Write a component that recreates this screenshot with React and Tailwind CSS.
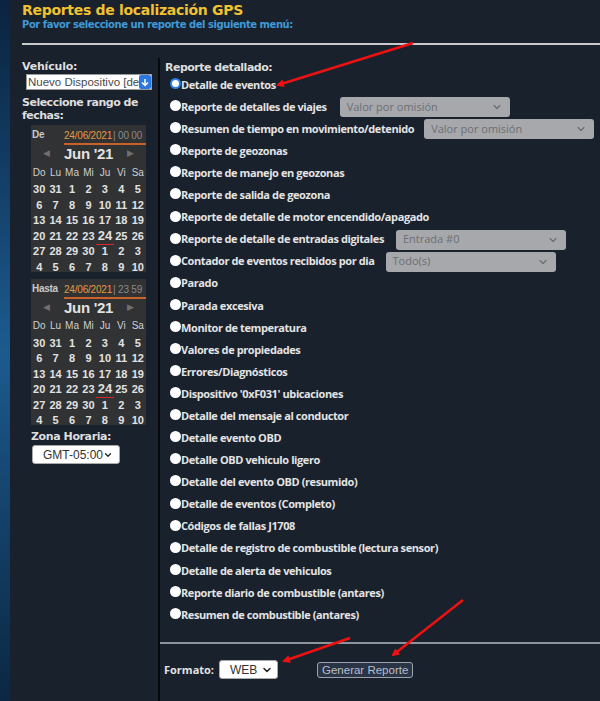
import { ChevronDown } from "lucide-react";

const reportes = [
  "Detalle de eventos",
  "Reporte de detalles de viajes",
  "Resumen de tiempo en movimiento/detenido",
  "Reporte de geozonas",
  "Reporte de manejo en geozonas",
  "Reporte de salida de geozona",
  "Reporte de detalle de motor encendido/apagado",
  "Reporte de detalle de entradas digitales",
  "Contador de eventos recibidos por dia",
  "Parado",
  "Parada excesiva",
  "Monitor de temperatura",
  "Valores de propiedades",
  "Errores/Diagnósticos",
  "Dispositivo '0xF031' ubicaciones",
  "Detalle del mensaje al conductor",
  "Detalle evento OBD",
  "Detalle OBD vehiculo ligero",
  "Detalle del evento OBD (resumido)",
  "Detalle de eventos (Completo)",
  "Códigos de fallas J1708",
  "Detalle de registro de combustible (lectura sensor)",
  "Detalle de alerta de vehiculos",
  "Reporte diario de combustible (antares)",
  "Resumen de combustible (antares)",
];

// selects grises al lado de algunos reportes
const extras = {
  1: { texto: "Valor por omisión", ml: "ml-[13px]" },
  2: { texto: "Valor por omisión", ml: "ml-[10px]" },
  7: { texto: "Entrada #0", ml: "ml-[12px]" },
  8: { texto: "Todo(s)", ml: "ml-[11px]" },
};

const semanas = [
  [30, 31, 1, 2, 3, 4, 5],
  [6, 7, 8, 9, 10, 11, 12],
  [13, 14, 15, 16, 17, 18, 19],
  [20, 21, 22, 23, 24, 25, 26],
  [27, 28, 29, 30, 1, 2, 3],
  [4, 5, 6, 7, 8, 9, 10],
];

const dias = ["Do", "Lu", "Ma", "Mi", "Ju", "Vi", "Sa"];

function Calendario({ etiqueta, hora }) {
  return (
    <div className="w-[115px] bg-[#313233] font-['Liberation_Sans',sans-serif] text-[#e2e2e2] pb-[1px]">
      <div className="flex items-end h-[20px] pl-[1px]">
        <span className="w-[32px] text-[10px] font-bold text-[#c9c9c9] leading-[12px] mb-[4px] tracking-[-0.3px]">
          {etiqueta}
        </span>
        <div className="flex-1 border-b-2 border-[#c8612a] flex items-end h-[14px] text-[10px] leading-[12px] pb-[1px] whitespace-nowrap tracking-[-0.2px]">
          <span className="text-[#e49a45]">24/06/2021</span>
          <span className="text-[#8a8a8a] ml-[1px]">| {hora}</span>
        </div>
      </div>
      <div className="flex items-center justify-center h-[18px] gap-[14px]">
        <span className="text-[9px] text-[#6f6f6f]">◀</span>
        <span className="text-[15px] font-bold leading-[18px] tracking-[-0.3px]">Jun '21</span>
        <span className="text-[9px] text-[#6f6f6f]">▶</span>
      </div>
      <div className="grid grid-cols-7 h-[18px] items-center text-[10px] text-[#d0d0d0] text-center">
        {dias.map((d) => (
          <span key={d}>{d}</span>
        ))}
      </div>
      {semanas.map((fila, i) => (
        <div
          key={i}
          className={`grid grid-cols-7 items-center text-center font-bold text-[11px] ${
            i === 5 ? "h-[12px]" : "h-[15.5px]"
          }`}
        >
          {fila.map((n, j) =>
            i === 3 && n === 24 ? (
              <span key={j} className="relative text-[13px] leading-[14px]">
                {n}
                <span className="absolute left-[-1px] right-[-1px] bottom-[-2px] h-[1px] bg-[#d8282b]" />
              </span>
            ) : (
              <span key={j}>{n}</span>
            )
          )}
        </div>
      ))}
    </div>
  );
}

function SelectGris({ texto, ml }) {
  return (
    <div
      className={`w-[170px] ${ml} h-[20px] rounded-[3px] bg-[#a6a8ab] flex items-center justify-between pl-[7px] pr-[7px] text-[11px] text-[#6c6f74] font-normal font-['Open_Sans',sans-serif]`}
    >
      <span>{texto}</span>
      <ChevronDown size={12} strokeWidth={2.5} className="text-[#6c6f74]" />
    </div>
  );
}

export default function App() {
  return (
    <div className="relative flex w-[600px] h-[701px] overflow-hidden bg-[#19212d] font-['DejaVu_Sans',sans-serif]">
      <div className="w-[10px] shrink-0 bg-gradient-to-b from-[#0a2340] via-[#1c5b8f] to-[#0b2743]" />

      <div className="flex-1 flex flex-col">
        <div className="pl-[12px] pt-[1px]">
          <h1 className="text-[14px] font-bold text-[#f0c131] leading-[18px] tracking-[-0.3px]">
            Reportes de localización GPS
          </h1>
          <p className="text-[10px] font-bold text-[#3f9ad6] leading-[12px] tracking-[-0.45px]">
            Por favor seleccione un reporte del siguiente menú:
          </p>
          <hr className="mt-[12px] border-0 h-[2px] bg-[#c6cace]" />
        </div>

        <div className="flex flex-1 mt-[13px]">
          {/* columna izquierda */}
          <div className="w-[150px] shrink-0 border-r-2 border-[#07090c] pl-[12px] text-[#dedede]">
            <div className="text-[11px] font-bold leading-[14px] mt-[2px] tracking-[-0.2px]">Vehículo:</div>
            <div className="ml-[4px] w-[126px] h-[16px] bg-white border border-[#9a9a9a] flex items-center overflow-hidden">
              <span className="flex-1 text-[11.5px] text-[#4a4a4a] leading-[14px] whitespace-nowrap overflow-hidden pl-[1px] font-['Liberation_Sans',sans-serif]">
                Nuevo Dispositivo [de
              </span>
              <span className="w-[12px] h-[14px] bg-[#2a78df] flex items-center justify-center shrink-0 rounded-[2px]">
                <svg width="8" height="9" viewBox="0 0 8 9">
                  <path d="M4 1v6M1 4.5L4 7.5 7 4.5" stroke="white" strokeWidth="1.5" fill="none" />
                </svg>
              </span>
            </div>
            <div className="text-[11px] font-bold leading-[13px] mt-[6px] tracking-[-0.5px] whitespace-nowrap">
              Seleccione rango de
              <br />
              fechas:
            </div>
            <div className="ml-[9px] mt-[3px]">
              <Calendario etiqueta="De" hora="00 00" />
            </div>
            <div className="ml-[9px] mt-[7px]">
              <Calendario etiqueta="Hasta" hora="23 59" />
            </div>
            <div className="text-[11px] font-bold leading-[13px] mt-[5px] ml-[9px] tracking-[-0.4px]">Zona Horaria:</div>
            <div className="ml-[10px] mt-[2px] w-[88px] h-[19px] bg-white rounded-[3px] border border-[#aaa] flex items-center justify-between pl-[10px] pr-[6px] text-[12px] text-[#333] font-['Liberation_Sans',sans-serif] whitespace-nowrap">
              <span>GMT-05:00</span>
              <ChevronDown size={12} strokeWidth={3} className="text-[#222]" />
            </div>
          </div>

          {/* columna derecha */}
          <div className="flex-1 flex flex-col">
            <div className="pl-[5px] flex-1">
              <div className="text-[11px] font-bold text-[#dedede] leading-[14px] mt-[3px] mb-[-1px] tracking-[-0.5px]">
                Reporte detallado:
              </div>
              <div className="flex flex-col font-['Open_Sans',sans-serif]">
                {reportes.map((r, i) => (
                  <div key={r} className="h-[22.08px] flex items-center pl-[5px]">
                    <span
                      className={`w-[11px] h-[11px] rounded-full bg-white shrink-0 mb-[3px] ${
                        i === 0 ? "border-2 border-[#2f7fe8]" : ""
                      }`}
                    />
                    <span className="text-[11px] font-bold text-[#e4e4e4] whitespace-nowrap tracking-[-0.4px]">
                      {r}
                    </span>
                    {extras[i] && <SelectGris {...extras[i]} />}
                  </div>
                ))}
              </div>
            </div>
            <hr className="mb-[16px] mt-[16px] border-0 h-[2px] bg-[#8e949b]" />
            <div className="flex items-center pl-[4px] h-[20px] mb-[22px]">
              <span className="text-[11px] font-bold text-[#e4e4e4] font-['Open_Sans',sans-serif]">Formato:</span>
              <div className="ml-[5px] w-[59px] h-[19px] bg-white rounded-[3px] border border-[#aaa] flex items-center justify-between pl-[10px] pr-[4px] text-[12px] text-[#333] font-['Liberation_Sans',sans-serif]">
                <span>WEB</span>
                <ChevronDown size={12} strokeWidth={3} className="text-[#222]" />
              </div>
              <button className="ml-[39px] h-[16px] px-[4px] rounded-[3px] border border-[#9aa3ad] bg-[#2a3447] text-[11.5px] leading-[14px] text-[#b9bec6] font-['Liberation_Sans',sans-serif]">
                Generar Reporte
              </button>
            </div>
          </div>
        </div>
      </div>

      {/* flechas rojas */}
      <svg className="absolute inset-0 pointer-events-none" width="600" height="701">
        <defs>
          <marker id="punta" markerWidth="8" markerHeight="8" refX="6" refY="4" orient="auto" markerUnits="userSpaceOnUse">
            <path d="M0 0L8 4L0 8z" fill="#ee1111" />
          </marker>
        </defs>
        <line x1="413" y1="43" x2="278" y2="85" stroke="#ee1111" strokeWidth="2.5" markerEnd="url(#punta)" />
        <line x1="350" y1="638" x2="284" y2="661" stroke="#ee1111" strokeWidth="2.5" markerEnd="url(#punta)" />
        <line x1="463" y1="600" x2="393" y2="655" stroke="#ee1111" strokeWidth="2.5" markerEnd="url(#punta)" />
      </svg>
    </div>
  );
}
